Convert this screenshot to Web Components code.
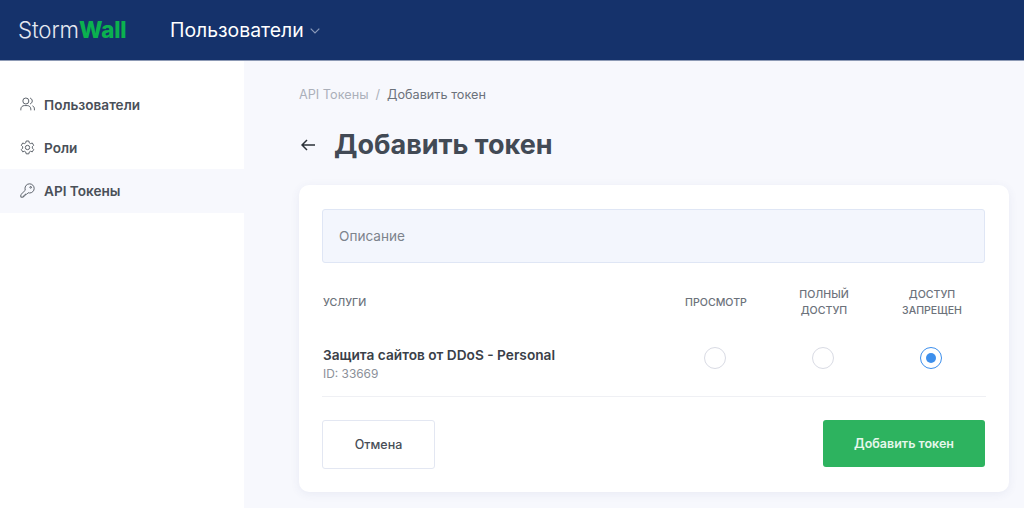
<!DOCTYPE html>
<html lang="ru">
<head>
<meta charset="utf-8">
<title>Добавить токен</title>
<style>
    html, body { margin: 0; height: 100%; }
    body { font-family: Inter, "Noto Sans", sans-serif; background: #f7f8fd; overflow: hidden; }
</style>
</head>
<body>
<app-shell>
    <top-bar slot="top"></top-bar>
    <side-nav slot="side">
        <nav-item icon="users">Пользователи</nav-item>
        <nav-item icon="gear">Роли</nav-item>
        <nav-item icon="key" active>API Токены</nav-item>
    </side-nav>
    <token-page>
        <token-form></token-form>
    </token-page>
</app-shell>

<script>
const ICONS = {
    users: `<circle cx="7" cy="4.800" r="3.600"/><path d="M1 16v-1.500c0-2.400 1.900-4.200 4.200-4.200h3.600c2.300 0 4.200 1.800 4.200 4.200V16"/><path d="M12 1.300c1.600.4 2.700 1.800 2.700 3.500s-1.100 3.100-2.700 3.500"/><path d="M15 10.600c1.400.6 2.300 2 2.300 3.700V16"/>`,
    gear: `<circle cx="9" cy="9" r="2.600"/><path d="M7.400 1.200h3.200l.5 2.200 1.500.9 2.200-.7 1.600 2.800-1.600 1.600v1.800l1.600 1.600-1.600 2.800-2.200-.7-1.500.9-.5 2.200H7.400l-.5-2.200-1.500-.9-2.200.7-1.600-2.800 1.600-1.600V8L1.600 6.400l1.600-2.800 2.200.7 1.500-.9z" stroke-linejoin="round"/>`,
    key: `<path d="M11.500 1a5.500 5.500 0 0 1 0 11c-.6 0-1.200-.1-1.700-.3L8 13.500H6v2H4V17H1v-3l5.300-5.300c-.2-.5-.3-1.100-.3-1.700A5.500 5.500 0 0 1 11.500 1z" stroke-linejoin="round"/><circle cx="12.800" cy="5.200" r="1"/>`
};

class AppShell extends HTMLElement {
    constructor(){
        super();
        this.attachShadow({mode: "open"});
        this.shadowRoot.innerHTML = `
        <style>
            :host { display: flex; flex-direction: column; height: 508px; }
            .body { flex: 1; display: flex; min-height: 0; }
            main { flex: 1; min-width: 0; }
        </style>
        <slot name="top"></slot>
        <div class="body">
            <slot name="side"></slot>
            <main><slot></slot></main>
        </div>
        `;
    }
}

class TopBar extends HTMLElement {
    constructor(){
        super();
        this.attachShadow({mode: "open"});
        this.shadowRoot.innerHTML = `
        <style>
            :host { display: flex; align-items: center; height: 61px; background: #15326b; border-bottom: 1px solid #8d9ab5; box-sizing: border-box; padding-left: 18px; color: #fff; }
            .logo { font: 300 22.300px/1 Inter, sans-serif; width: 152px; letter-spacing: -.1px; color: #e4e8f0; }
            .logo b { font-weight: 800; color: #0bb14f; }
            .menu { display: flex; align-items: center; gap: 6px; font-size: 19.400px; font-weight: 400; }
            svg { width: 10px; height: 6px; fill: none; stroke: #8b9ab9; stroke-width: 1.200; margin-top: 1px; }
        </style>
        <div class="logo">Storm<b>Wall</b></div>
        <div class="menu">Пользователи <svg viewBox="0 0 10 6"><path d="M.7.7 5 5 9.300.7"/></svg></div>
        `;
    }
}

class SideNav extends HTMLElement {
    constructor(){
        super();
        this.attachShadow({mode: "open"});
        this.shadowRoot.innerHTML = `
        <style>
            :host { display: block; width: 244px; flex: none; background: #fff; padding-top: 22px; box-sizing: border-box; }
        </style>
        <slot></slot>
        `;
    }
}

class NavItem extends HTMLElement {
    constructor(){
        super();
        this.attachShadow({mode: "open"});
        const icon = ICONS[this.getAttribute("icon")];
        this.shadowRoot.innerHTML = `
        <style>
            :host { display: flex; align-items: center; gap: 9px; height: 43px; padding-left: 20px; font-size: 13.600px; font-weight: 600; color: #4a5058; }
            :host([active]) { background: #f7f8fd; padding-bottom: 1px; }
            svg { width: 15px; height: 15px; fill: none; stroke: #50565f; stroke-width: 1.100; flex: none; }
        </style>
        <svg viewBox="0 0 18 18">${icon}</svg>
        <slot></slot>
        `;
    }
}

class TokenPage extends HTMLElement {
    constructor(){
        super();
        this.attachShadow({mode: "open"});
        this.shadowRoot.innerHTML = `
        <style>
            :host { display: block; padding: 26px 15px 0 55px; }
            .crumbs { font-size: 12.700px; line-height: 16px; color: #abb0ba; display: flex; gap: 7px; }
            .crumbs .cur { color: #6c727b; }
            .head { display: flex; align-items: center; margin: 24px 0 22px; height: 36px; }
            svg { width: 15px; height: 12px; fill: none; stroke: #2b3037; stroke-width: 1.500; flex: none; margin: 0 18px 0 2px; }
            h1 { margin: 0; font-size: 27px; font-weight: 700; color: #424a55; line-height: 36px; }
        </style>
        <div class="crumbs"><span>API Токены</span><span>/</span><span class="cur">Добавить токен</span></div>
        <div class="head">
            <svg viewBox="0 0 15 12"><path d="M14 6H1M6 1 1 6l5 5"/></svg>
            <h1>Добавить токен</h1>
        </div>
        <slot></slot>
        `;
    }
}

class TokenForm extends HTMLElement {
    constructor(){
        super();
        this.attachShadow({mode: "open"});
        this.shadowRoot.innerHTML = `
        <style>
            :host { display: block; background: #fff; border-radius: 10px; box-shadow: 0 2px 10px rgba(60, 80, 140, .08); padding: 24px 24px 23px 23px; height: 307px; box-sizing: border-box; }
            .field { height: 54px; box-sizing: border-box; background: #f3f6fd; border: 1px solid #dfe6f5; border-radius: 3px; padding-left: 16px; display: flex; align-items: center; font-size: 13.600px; color: #7d838c; }
            .grid { display: grid; grid-template-columns: 1fr 108px 108px 108px; margin-right: -1px; }
            .th { font-size: 10.600px; line-height: 16px; font-weight: 500; color: #6c727b; text-align: center; height: 78px; box-sizing: border-box; padding-top: 2px; display: flex; align-items: center; justify-content: center; }
            .th.first { justify-content: flex-start; padding-left: 1px; }
            .row { grid-column: 1 / -1; display: grid; grid-template-columns: subgrid; align-items: start; height: 56px; box-sizing: border-box; padding-top: 5px; border-bottom: 1px solid #eff0f4; }
            .info { padding-left: 1px; }
            .name { font-size: 13.700px; font-weight: 600; color: #3a4048; line-height: 18px; }
            .id { font-size: 11.900px; color: #8b9099; line-height: 20px; }
            .cell { display: flex; justify-content: center; padding: 1px 2px 0 0; }
            .radio { width: 22px; height: 22px; box-sizing: border-box; border: 1px solid #d9dbe4; border-radius: 50%; display: flex; align-items: center; justify-content: center; }
            .radio.on { border-color: #3d8fec; }
            .radio.on::after { content: ""; width: 10px; height: 10px; border-radius: 50%; background: #3d8fec; }
            .actions { display: flex; justify-content: space-between; align-items: flex-start; margin-top: 23px; }
            button { font-family: inherit; font-size: 12.500px; font-weight: 500; border-radius: 3px; cursor: pointer; }
            .cancel { width: 113px; height: 49px; background: #fff; border: 1px solid #e3e7f2; color: #484e57; }
            .save { width: 162px; height: 47px; background: #2db35f; border: 0; color: #e6f7ec; font-weight: 600; }
        </style>
        <div class="field">Описание</div>
        <div class="grid">
            <div class="th first">УСЛУГИ</div>
            <div class="th">ПРОСМОТР</div>
            <div class="th">ПОЛНЫЙ<br>ДОСТУП</div>
            <div class="th">ДОСТУП<br>ЗАПРЕЩЕН</div>
            <div class="row">
                <div class="info">
                    <div class="name">Защита сайтов от DDoS - Personal</div>
                    <div class="id">ID: 33669</div>
                </div>
                <div class="cell"><span class="radio"></span></div>
                <div class="cell"><span class="radio"></span></div>
                <div class="cell"><span class="radio on"></span></div>
            </div>
        </div>
        <div class="actions">
            <button class="cancel">Отмена</button>
            <button class="save">Добавить токен</button>
        </div>
        `;
    }
}

customElements.define('app-shell', AppShell);
customElements.define('top-bar', TopBar);
customElements.define('side-nav', SideNav);
customElements.define('nav-item', NavItem);
customElements.define('token-page', TokenPage);
customElements.define('token-form', TokenForm);
</script>
</body>
</html>
